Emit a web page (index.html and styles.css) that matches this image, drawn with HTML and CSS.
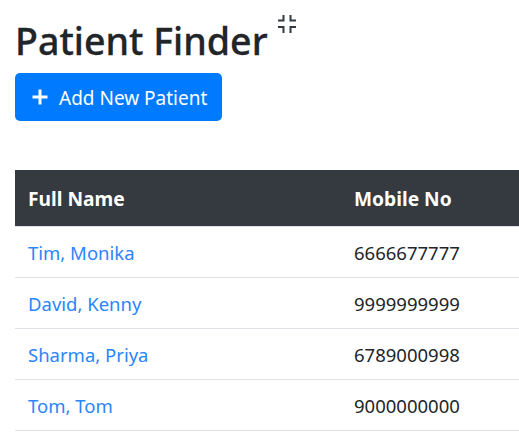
FILE: index.html
```html
<!DOCTYPE html>
<html lang="en">
<head>
<meta charset="utf-8">
<title>Patient Finder</title>
<link rel="stylesheet" href="styles.css">
</head>
<body>
<main class="page">
  <div class="title-row">
    <h1 class="title">Patient Finder</h1>
    <svg class="collapse-icon" viewBox="0 0 18 18" width="18" height="18" aria-hidden="true">
      <path d="M5.5 0v5.5H0M12.5 0v5.5H18M5.5 18v-6H0M12.5 18v-6H18" fill="none" stroke="#343a40" stroke-width="2"/>
    </svg>
  </div>
  <button class="add-btn" type="button">
    <svg class="plus-icon" viewBox="0 0 16 16" width="16" height="16" aria-hidden="true">
      <path d="M8 0.5v15M0.5 8h15" fill="none" stroke="#fff" stroke-width="3"/>
    </svg>
    <span class="add-label">Add New Patient</span>
  </button>
  <table class="patients">
    <thead>
      <tr><th class="col-name">Full Name</th><th>Mobile No</th></tr>
    </thead>
    <tbody>
      <tr><td><a href="#">Tim, Monika</a></td><td>6666677777</td></tr>
      <tr><td><a href="#">David, Kenny</a></td><td>9999999999</td></tr>
      <tr><td><a href="#">Sharma, Priya</a></td><td>6789000998</td></tr>
      <tr><td><a href="#">Tom, Tom</a></td><td>9000000000</td></tr>
    </tbody>
  </table>
</main>
</body>
</html>
```

FILE: styles.css
```css
html, body {
  margin: 0;
  padding: 0;
  overflow: hidden;
  height: 100%;
  background: #fff;
}
body {
  font-family: "Noto Sans", "Open Sans", sans-serif;
  font-size: 19px;
  color: #212529;
}
.page {
  padding: 14px 0 0 15px;
}
.title-row {
  display: flex;
  align-items: flex-start;
  height: 59px;
}
.title {
  margin: 0;
  font-size: 37.6px;
  font-weight: 500;
  line-height: 54px;
  -webkit-text-stroke: 0.3px #212529;
}
.collapse-icon {
  margin-left: 10px;
  margin-top: 1px;
}
.add-btn {
  display: flex;
  align-items: center;
  gap: 11px;
  width: 207px;
  height: 48px;
  padding: 0 17px;
  border: 0;
  border-radius: 5px;
  background: #007bff;
  color: #fff;
  font: inherit;
  font-size: 19px;
}
.plus-icon {
  flex: none;
}
.add-label {
  padding-top: 2px;
  white-space: nowrap;
}
.patients {
  margin-top: 49px;
  width: 640px;
  border-collapse: separate;
  border-spacing: 0;
  table-layout: fixed;
}
.col-name {
  width: 326px;
}
.patients th {
  height: 57px;
  padding: 0 13px;
  border-bottom: 1px solid #dee2e6;
  background: #343a40;
  color: #fff;
  font-size: 19.2px;
  font-weight: 700;
  text-align: left;
  box-sizing: border-box;
}
.patients td {
  height: 51px;
  padding: 1px 13px 0;
  border-bottom: 1px solid #dee2e6;
  box-sizing: border-box;
  font-size: 18.5px;
  line-height: 26px;
}
.patients a {
  color: #2a85ff;
  text-decoration: none;
}
```
